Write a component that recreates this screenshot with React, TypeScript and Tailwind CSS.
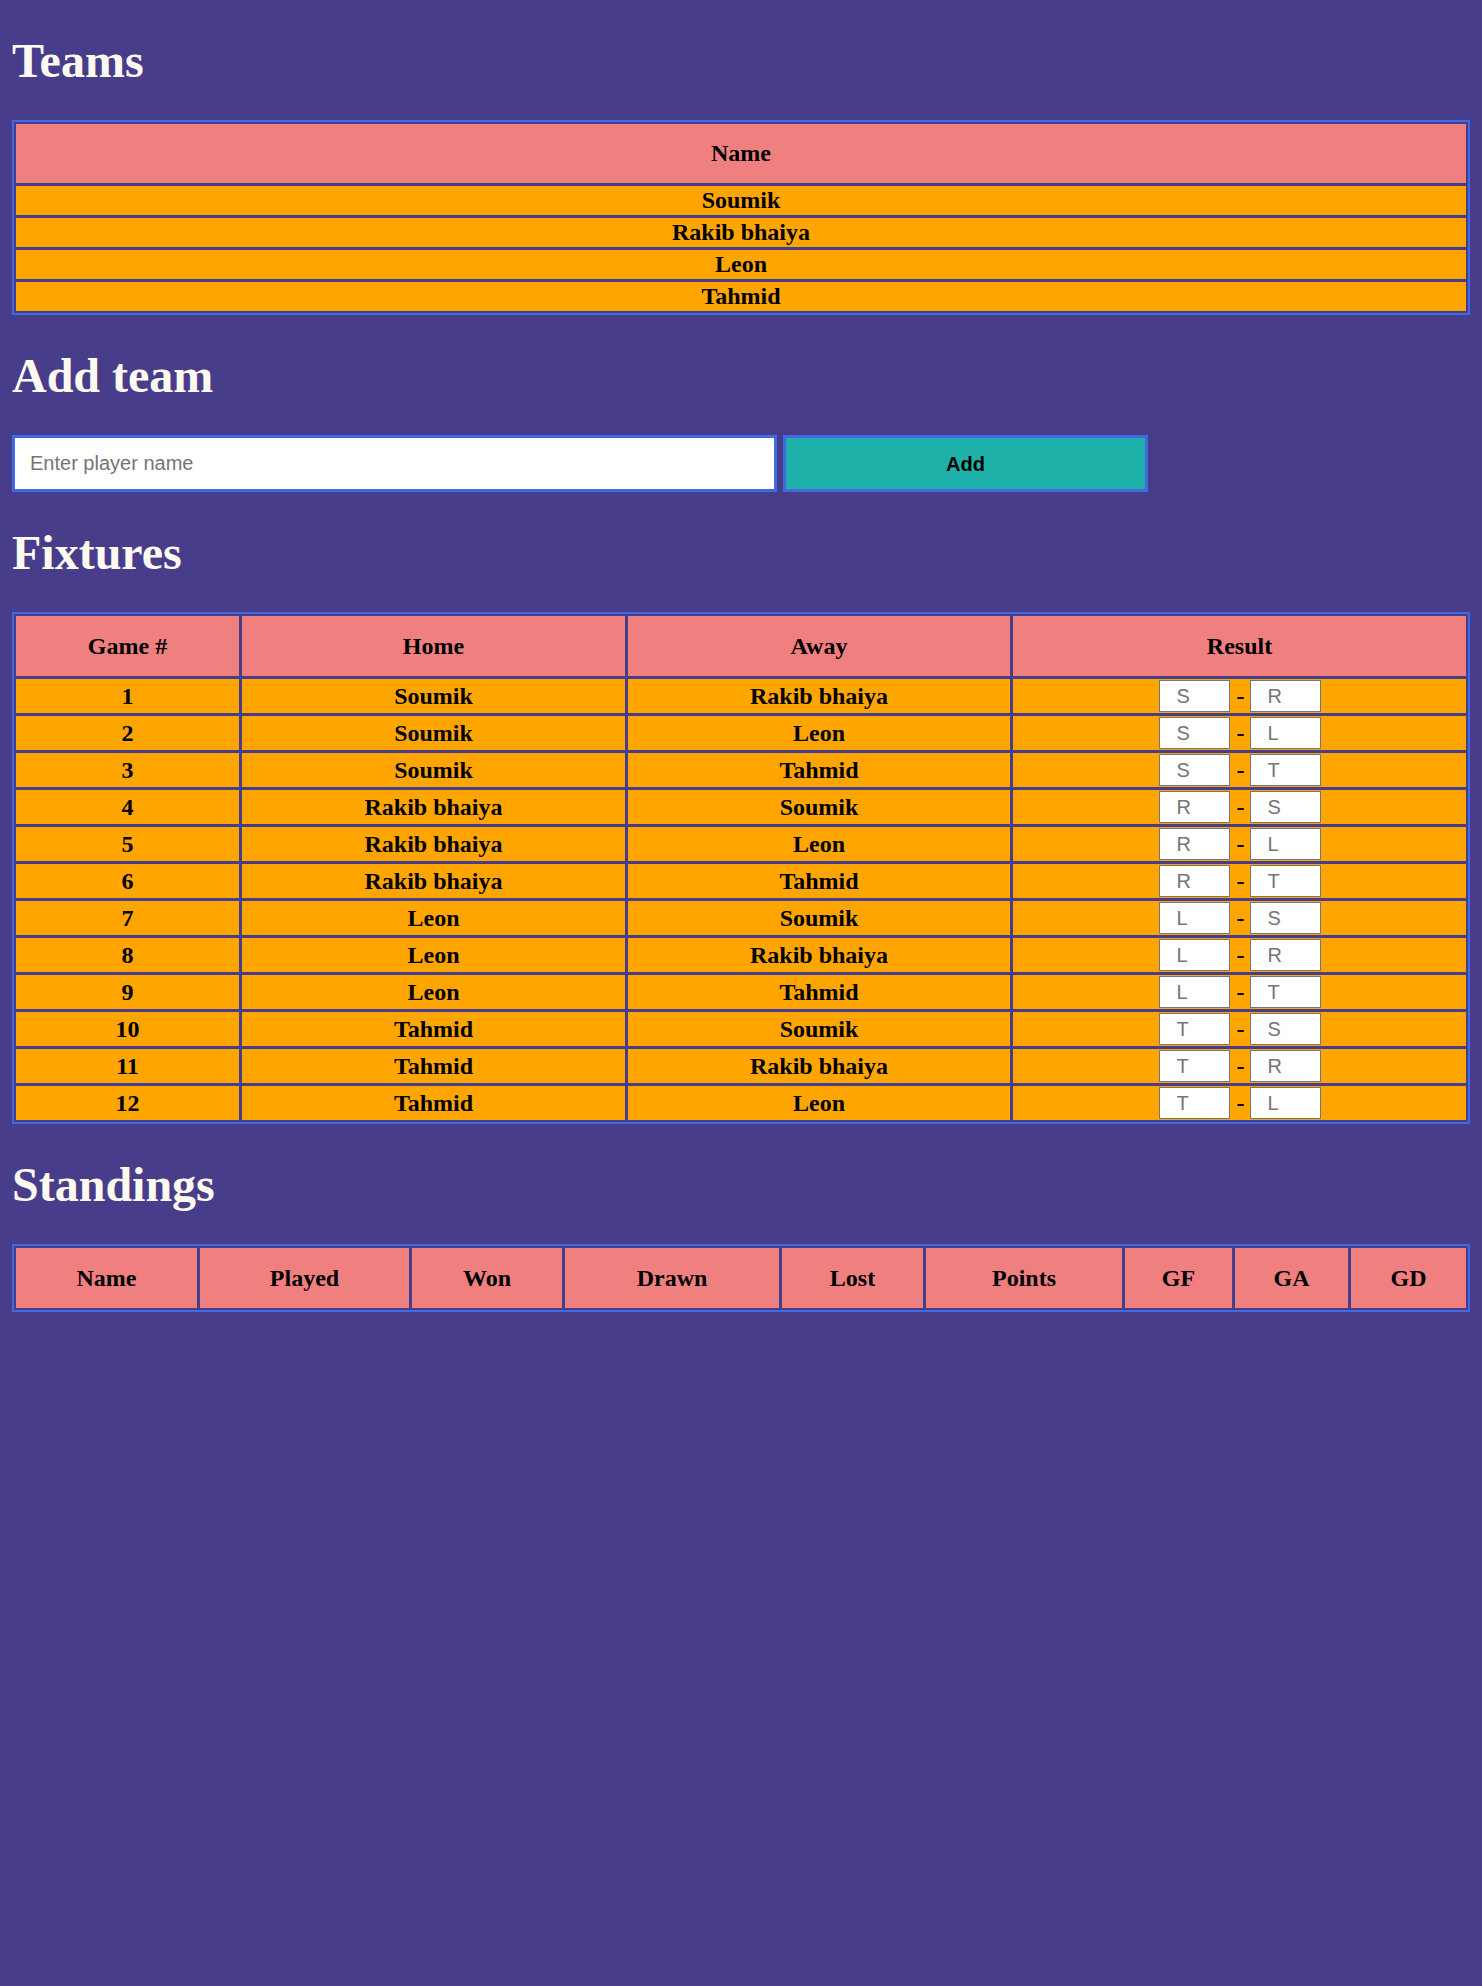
import React from "react";

const teams = ["Soumik", "Rakib bhaiya", "Leon", "Tahmid"];

const fixtures: { home: string; away: string }[] = [];
teams.forEach((h) => {
  teams.forEach((a) => {
    if (h !== a) fixtures.push({ home: h, away: a });
  });
});

const cell = "border border-[#483D8B] p-0 text-center font-bold text-[24px] leading-[27px] text-black";
const tableCls =
  "w-full border-separate border-spacing-[1px] border-2 border-[#4169E1] font-['Liberation_Serif',serif]";

function Heading({ children }: { children: React.ReactNode }) {
  return (
    <h1 className="mt-[34px] mb-[33px] text-[48px] leading-[53px] font-bold text-[#FFFAF0] font-['Liberation_Serif',serif]">
      {children}
    </h1>
  );
}

const standingsCols: [string, string][] = [
  ["Name", "w-[183px]"],
  ["Played", "w-[211px]"],
  ["Won", "w-[152px]"],
  ["Drawn", "w-[216px]"],
  ["Lost", "w-[143px]"],
  ["Points", "w-[198px]"],
  ["GF", "w-[109px]"],
  ["GA", "w-[115px]"],
  ["GD", ""],
];

const scoreInput =
  "w-[71px] h-[32px] border border-[#767676] bg-white pl-[17px] text-[20px] font-['Liberation_Sans',Arial,sans-serif] font-normal placeholder:text-[#757575] outline-none";

export default function App() {
  return (
    <div className="flow-root min-h-screen bg-[#483D8B] px-3">
      <Heading>Teams</Heading>
      <table className={tableCls}>
        <thead>
          <tr>
            <th className={`${cell} h-[61px] bg-[#F08080]`}>Name</th>
          </tr>
        </thead>
        <tbody>
          {teams.map((t) => (
            <tr key={t}>
              <td className={`${cell} h-[31px] bg-[#FFA500]`}>{t}</td>
            </tr>
          ))}
        </tbody>
      </table>

      <Heading>Add team</Heading>
      <div className="flex items-center">
        <input
          type="text"
          placeholder="Enter player name"
          className="w-[765px] h-[57px] border-[3px] border-[#4169E1] bg-white pl-[15px] text-[20px] font-['Liberation_Sans',Arial,sans-serif] text-black placeholder:text-[#757575] outline-none"
        />
        <button className="ml-[6px] w-[365px] h-[57px] border-[3px] border-[#4169E1] bg-[#20B2AA] text-[20px] font-bold text-black font-['Liberation_Sans',Arial,sans-serif]">
          Add
        </button>
      </div>

      <Heading>Fixtures</Heading>
      <table className={`${tableCls} table-fixed`}>
        <thead>
          <tr>
            <th className={`${cell} h-[62px] w-[225px] bg-[#F08080]`}>Game #</th>
            <th className={`${cell} h-[62px] w-[385px] bg-[#F08080]`}>Home</th>
            <th className={`${cell} h-[62px] w-[384px] bg-[#F08080]`}>Away</th>
            <th className={`${cell} h-[62px] bg-[#F08080]`}>Result</th>
          </tr>
        </thead>
        <tbody>
          {fixtures.map((f, i) => (
            <tr key={i}>
              <td className={`${cell} h-[36px] bg-[#FFA500]`}>{i + 1}</td>
              <td className={`${cell} h-[36px] bg-[#FFA500]`}>{f.home}</td>
              <td className={`${cell} h-[36px] bg-[#FFA500]`}>{f.away}</td>
              <td className={`${cell} h-[36px] bg-[#FFA500]`}>
                <div className="flex items-center justify-center gap-[7px]">
                  <input type="text" placeholder={f.home[0]} className={scoreInput} />
                  <span className="w-[6px] text-center">-</span>
                  <input type="text" placeholder={f.away[0]} className={scoreInput} />
                </div>
              </td>
            </tr>
          ))}
        </tbody>
      </table>

      <Heading>Standings</Heading>
      <table className={`${tableCls} table-fixed`}>
        <thead>
          <tr>
            {standingsCols.map(([label, w]) => (
              <th key={label} className={`${cell} h-[62px] bg-[#F08080] ${w}`}>
                {label}
              </th>
            ))}
          </tr>
        </thead>
        <tbody></tbody>
      </table>
    </div>
  );
}
